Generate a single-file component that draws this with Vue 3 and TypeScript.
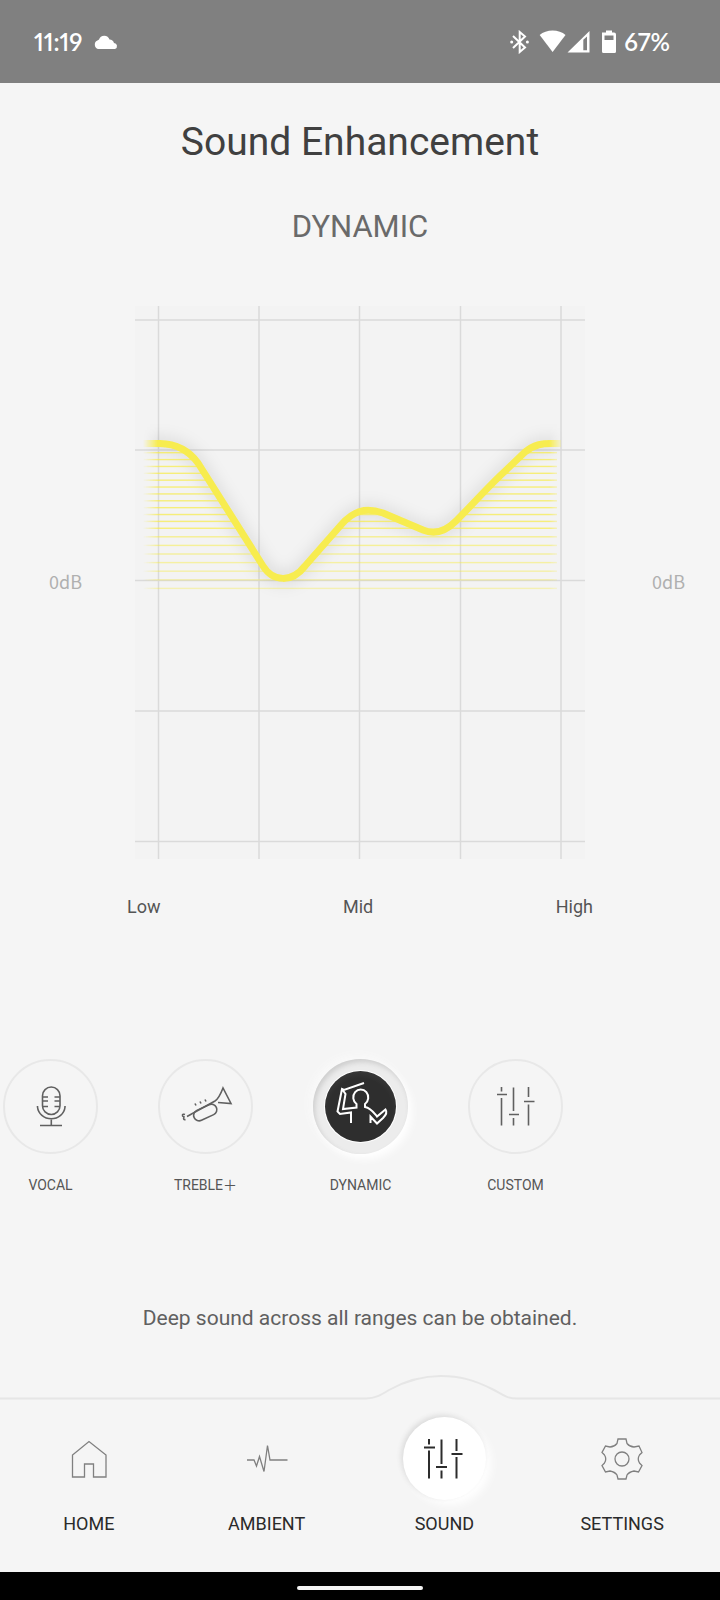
<script setup lang="ts">
import { ref } from 'vue'

type PresetIcon = 'mic' | 'trumpet' | 'conductor' | 'sliders'
interface Preset { name: string; icon: PresetIcon }
interface Tab { name: string; icon: string }
interface Stripe { y: number; opacity: number }

const presets: Preset[] = [
  { name: 'VOCAL', icon: 'mic' },
  { name: 'TREBLE\uFF0B', icon: 'trumpet' },
  { name: 'DYNAMIC', icon: 'conductor' },
  { name: 'CUSTOM', icon: 'sliders' },
]
const tabs: Tab[] = [
  { name: 'HOME', icon: 'home' },
  { name: 'AMBIENT', icon: 'pulse' },
  { name: 'SOUND', icon: 'sliders' },
  { name: 'SETTINGS', icon: 'gear' },
]
const selected = ref('DYNAMIC')
const activeTab = ref('SOUND')

const columns = [23.5, 124, 224.5, 325.5, 426]
const rows = [14, 144, 274.5, 405, 535.5]
const curve =
  'M8 137.5H25C43 138 55 146 63 157L128 260C138 276 157 277 170 260L206 219C218 205 230 201 248 207L288 224C300 229 311 225 321 215C335 201 352 182 368 167L390 146C400 138 408 137.5 416 137.5H426'
const stripes: Stripe[] = [
  ...Array.from({ length: 12 }, (_, i) => ({ y: 146.7 + i * 6.87, opacity: 0.72 })),
  ...Array.from({ length: 7 }, (_, i) => ({ y: 230.8 + i * 8.6, opacity: 0.58 - i * 0.035 })),
]
</script>

<template>
  <div class="screen">
    <header class="status">
      <span class="clock">11:19</span>
      <svg class="cloud" width="24" height="14" viewBox="0 0 24 14" aria-hidden="true">
        <path d="M4.500 14A4.500 4.500 0 0 1 3.400 5.500Q4.500 4.800 5 4.500A5.500 5.500 0 0 1 15.500 4.500Q19 4.500 20 8A3.100 3.100 0 0 1 21 14Z" />
      </svg>
      <span class="spacer"></span>
      <svg class="sysicons" width="106" height="24" viewBox="0 0 106 24" aria-hidden="true">
        <path d="M3 6L15 17.500L9.700 22V2L15 6.500L3 18" fill="none" stroke="#fff" stroke-width="2" />
        <circle cx="1.700" cy="12" r="1.500" /><circle cx="17.400" cy="12" r="1.500" />
        <path d="M29.700 5C36 -1 49.300 -1 55.500 5L42.600 22Z" />
        <path fill-rule="evenodd" d="M57.500 22.500L79.500 1V22.500ZM73.300 9.800V20.300H77V6.500Z" />
        <path fill-rule="evenodd" d="M92 2.500H96V.5H102V2.500H104Q106 2.500 106 4.500V21.500Q106 23 104.500 23H93.500Q92 23 92 21.500ZM94.500 5.500V10H103.500V5.500Z" />
      </svg>
      <span class="battery">67%</span>
    </header>

    <main>
      <h1>Sound Enhancement</h1>
      <h2>DYNAMIC</h2>

      <section class="graph" aria-label="Equalizer curve">
        <span class="db">0dB</span>
        <svg class="plot" viewBox="0 0 450 553" aria-hidden="true">
          <defs>
            <linearGradient id="edges" gradientUnits="userSpaceOnUse" x1="8" y1="0" x2="429" y2="0">
              <stop offset="0" stop-color="#fff" stop-opacity="0" />
              <stop offset="0.035" stop-color="#fff" />
              <stop offset="0.965" stop-color="#fff" />
              <stop offset="1" stop-color="#fff" stop-opacity="0" />
            </linearGradient>
            <mask id="fade" maskUnits="userSpaceOnUse" x="0" y="0" width="450" height="553">
              <rect width="450" height="553" fill="url(#edges)" />
            </mask>
            <clipPath id="below"><path :d="curve + 'V300H8Z'" /></clipPath>
            <filter id="shade" filterUnits="userSpaceOnUse" x="-10" y="90" width="470" height="240">
              <feGaussianBlur stdDeviation="8" />
            </filter>
          </defs>
          <rect width="450" height="553" fill="#f3f3f3" />
          <g stroke="#dadada" stroke-width="1.500">
            <line v-for="x in columns" :key="'c' + x" :x1="x" :x2="x" y1="0" y2="553" />
            <line v-for="y in rows" :key="'r' + y" x1="0" x2="450" :y1="y" :y2="y" />
          </g>
          <g mask="url(#fade)">
            <path :d="curve" fill="none" stroke="#000" stroke-opacity="0.130" stroke-width="9" filter="url(#shade)" />
            <g clip-path="url(#below)">
              <rect v-for="s in stripes" :key="s.y" x="8" :y="s.y - 0.7" width="414" height="1.400" fill="#f6ec4a" :opacity="s.opacity" />
            </g>
            <path :d="curve" fill="none" stroke="#f7ec4f" stroke-width="7" stroke-linejoin="round" />
          </g>
        </svg>
        <span class="db right">0dB</span>
      </section>
      <div class="bands"><span>Low</span><span>Mid</span><span>High</span></div>

      <div class="presets">
        <button
          v-for="p in presets"
          :key="p.name"
          type="button"
          class="preset"
          :class="{ on: selected === p.name }"
          :aria-pressed="selected === p.name"
          @click="selected = p.name"
        >
          <span class="ring">
            <span class="disc">
              <svg v-if="p.icon === 'mic'" width="60" height="60" viewBox="0 0 60 60">
                <rect x="21.500" y="10" width="17.500" height="27.500" rx="8.750" />
                <path d="M21.500 20H27M21.500 24H27M21.500 29.500H27M33.500 20H39M33.500 24H39M33.500 29.500H39M16.500 29V30A13.800 12.800 0 0 0 44 30V29M30.300 42.800V48.500M19 48.500H41" />
              </svg>
              <svg v-else-if="p.icon === 'trumpet'" width="60" height="60" viewBox="0 0 60 60">
                <path d="M11 39.500L39 24Q43 21.500 47 11L55 26.500L42 25.500M9 37.500C6 36.500 5.500 39 8 40C7 42 8 43 9.500 42.500M19 26.500L20 28.500M24 24.500L25 26.500M29 22.500L30 24.500" />
                <rect x="17" y="30" width="24.500" height="11" rx="5.500" transform="rotate(-25 29.250 35.500)" />
              </svg>
              <svg v-else-if="p.icon === 'conductor'" class="bright" width="60" height="60" viewBox="0 0 60 60">
                <path d="M33 6L13 13L11 12L6.500 34.500L9 37L20 35.500V46M11 12L14.500 17L12 32L25.500 30.500V27A7.500 8 0 1 1 34 27V30C40 31 43 36 46 39.500L54.500 32.500Q57 36 52 41L46 46.500L39.500 39.500V46" />
              </svg>
              <svg v-else width="60" height="60" viewBox="0 0 60 60">
                <path d="M15.500 10V14.500M15.500 21V48.500M11 17.500H21M27.500 10.500V34M27.500 41V48.500M23 37.500H33M42.500 10V20M42.500 27.500V48.500M38 24.500H48.500" />
              </svg>
            </span>
          </span>
          <span class="name">{{ p.name }}</span>
        </button>
      </div>

      <p class="about">Deep sound across all ranges can be obtained.</p>
    </main>

    <nav>
      <svg class="edge" viewBox="0 0 720 26" preserveAspectRatio="none" aria-hidden="true">
        <path d="M0 23.500H366C375 23.500 381 20 389 15C407 5 424 1 441 1C460 1 474 5 492 14C502 19 506 23.500 517 23.500H720" />
      </svg>
      <div class="tabs">
        <button
          v-for="t in tabs"
          :key="t.name"
          type="button"
          class="tab"
          :class="{ on: activeTab === t.name }"
          @click="activeTab = t.name"
        >
          <span class="knob">
            <svg v-if="t.icon === 'home'" width="48" height="48" viewBox="0 0 48 48">
              <path d="M7.500 42V20L24 6.500L41 20V42H28.500V29H19.500V42Z" />
            </svg>
            <svg v-else-if="t.icon === 'pulse'" width="48" height="48" viewBox="0 0 48 48">
              <path d="M4 25H11L13.500 31L16.500 21.500L21 36.500L24.500 10.500L27 25H44.500" />
            </svg>
            <svg v-else-if="t.icon === 'sliders'" width="48" height="48" viewBox="0 0 48 48">
              <path d="M9 4V9.500M9 15.500V43.500M4 12.500H15M21.500 4.500V29M21.500 35.500V43.500M16 32H27M36.500 4V16M36.500 22V43.500M31.500 19H42.500" />
            </svg>
            <svg v-else width="48" height="48" viewBox="0 0 48 48">
              <circle cx="24" cy="24" r="7" />
              <path d="M20 4H28L29 8.500Q32 12 36 12L41 11L44 17.500L41.500 20Q39 24 41.500 28L44 30.500L40.500 37L36 36Q31 37 29 40L28 44H20L19 40Q17 37 12 36L7.500 37L4 30.500L6.500 28Q9 24 6.500 20L4 17.500L7.500 11L12 12Q16 12 19 8.500Z" />
            </svg>
          </span>
          <span>{{ t.name }}</span>
        </button>
      </div>
    </nav>
    <footer><span class="handle"></span></footer>
  </div>
</template>

<style>
html, body { margin: 0; background: #f5f5f5; }
</style>
<style scoped>
.screen { display: flex; flex-direction: column; min-height: 100vh; overflow: hidden; background: #f5f5f5; font-family: Roboto, "Noto Sans CJK JP", sans-serif; color: #555; }
button { border: 0; padding: 0; background: none; font: inherit; color: inherit; cursor: pointer; }
.status { display: flex; align-items: center; box-sizing: border-box; height: 83px; padding: 0 50px 0 34px; background: #808080; color: #fff; font-family: Lato, Roboto, sans-serif; font-weight: 600; font-size: 24px; font-variant-numeric: proportional-nums; }
.status svg { fill: #fff; }
.cloud { margin-left: 12px; }
.spacer { flex: 1; }
.sysicons { margin-right: 8px; }
main { display: flex; flex-direction: column; flex: 1; }
h1 { margin: 34px 0 0; font-size: 39px; line-height: 50px; font-weight: 400; text-align: center; color: #404040; }
h2 { margin: 40px 0 0; font-size: 31px; line-height: 40px; font-weight: 400; text-align: center; color: #6a6a6a; }
.graph { display: grid; grid-template-columns: 135fr 450fr 135fr; align-items: center; margin-top: 59px; }
.plot { display: block; width: 100%; }
.db { padding: 0 4px 4px 0; text-align: center; font-family: "Noto Sans CJK JP", sans-serif; font-size: 18px; line-height: 24px; color: #b0b0b0; }
.db.right { padding: 0 0 4px 32px; }
.bands { display: flex; justify-content: space-between; padding: 0 127px; margin-top: 36px; font-size: 18px; line-height: 24px; }
.presets { display: flex; gap: 58px; margin: 140px 0 0 2px; }
.preset { display: flex; flex-direction: column; align-items: center; gap: 19px; flex: none; width: 97px; }
.ring { display: flex; align-items: center; justify-content: center; box-sizing: border-box; width: 95px; height: 95px; border: 2px solid #e8e8e8; border-radius: 50%; }
.disc { display: flex; align-items: center; justify-content: center; width: 71px; height: 71px; border-radius: 50%; }
.on .ring { border: 0; background: #ececec; box-shadow: inset 2px 3px 5px #cecece, 4px 5px 8px #fff, -3px -3px 10px #fafafa; }
.on .disc { background: radial-gradient(circle at 50% 55%, #2e2e2e 60%, #484848); box-shadow: 0 0 0 1px #fff; }
.ring svg { fill: none; stroke: #606060; stroke-width: 1.6; }
.ring .bright { stroke: #fff; stroke-width: 2; }
.name { font-size: 14px; line-height: 24px; height: 24px; white-space: nowrap; }
.about { margin: 105px 20px 0; font-size: 21px; line-height: 32px; text-align: center; color: #606060; }
nav { flex: none; }
.edge { display: block; width: 100%; height: 26px; fill: none; stroke: #e6e6e6; stroke-width: 2; }
.tabs { display: grid; grid-template-columns: repeat(4, 1fr); padding: 16px 9px 36px 0; }
.tab { display: flex; flex-direction: column; align-items: center; gap: 12px; font-size: 18px; line-height: 24px; color: #2a2a2a; }
.knob { display: flex; align-items: center; justify-content: center; width: 83px; height: 83px; border-radius: 50%; }
.knob svg { fill: none; stroke: #808080; stroke-width: 1.3; }
.tab.on .knob { background: #fff; box-shadow: -2px -2px 5px #dcdcdc, 5px 5px 10px #fff; }
.tab.on .knob svg { stroke: #2c2c2c; stroke-width: 2; }
footer { display: flex; align-items: center; justify-content: center; height: 28px; background: #000; }
.handle { width: 126px; height: 4px; border-radius: 2px; background: #f4f4f4; margin-top: 3px; }
</style>
